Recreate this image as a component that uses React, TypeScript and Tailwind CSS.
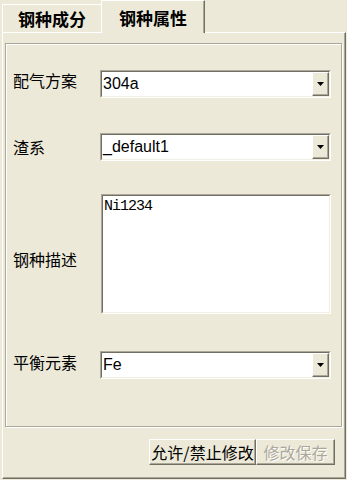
import React from "react";

const cjk = "font-['Noto_Sans_CJK_SC','Noto_Sans',sans-serif]";

function Arrow() {
  return (
    <svg width="7" height="4" viewBox="0 0 7 4">
      <path d="M0 0H7L3.5 4Z" fill="#000" />
    </svg>
  );
}

function Combo({ value }: { value: string }) {
  return (
    <div className="flex h-[28px] w-[231px] border border-[#ACA899] border-b-white border-r-white bg-white">
      <div className="flex flex-1 border border-[#716F64] border-b-[#F1EFE2] border-r-[#F1EFE2]">
        <div className="flex-1 pl-[1px] text-[16px] leading-[24px] text-black font-['Liberation_Sans',Arial,sans-serif]">
          {value}
        </div>
        <div className="flex h-[24px] w-[17px] items-center justify-center border border-white border-r-[#716F64] border-b-[#716F64] bg-[#ECE9D8] shadow-[inset_-1px_-1px_0_#ACA899]">
          <Arrow />
        </div>
      </div>
    </div>
  );
}

export default function App() {
  return (
    <div className={`flex h-[480px] w-[347px] flex-col bg-[#ECE9D8] ${cjk}`}>
      {/* tabs */}
      <div className="relative z-10 flex h-[32px] items-end pl-[2px]">
        <div className="flex h-[28px] w-[99px] items-center justify-center border-l border-t border-white text-[17px] font-bold leading-none text-black">
          钢种成分
        </div>
        <div className="mb-[-1px] flex h-[33px] w-[104px] items-center justify-center border-l border-t border-white border-r border-r-[#716F64] bg-[#ECE9D8] text-[17px] font-bold leading-none text-black shadow-[inset_-1px_0_0_#ACA899]">
          钢种属性
        </div>
      </div>
      {/* panel */}
      <div className="ml-[2px] mb-[1px] flex w-[344px] flex-1 flex-col border-l border-t border-white border-r border-b border-r-[#716F64] border-b-[#716F64] shadow-[inset_-1px_-1px_0_#ACA899]">
        <div className="ml-[2px] mt-[10px] flex h-[384px] w-[337px] flex-col border border-[#ACA899] pl-[7px] pt-[26px] shadow-[inset_1px_1px_0_#fff,1px_1px_0_#fff]">
          <div className="flex items-center">
            <div className="mb-[8px] w-[87px] text-[16px] leading-[16px] text-black">配气方案</div>
            <Combo value="304a" />
          </div>
          <div className="mt-[35px] flex items-center">
            <div className="w-[87px] text-[16px] leading-[16px] text-black">渣系</div>
            <Combo value="_default1" />
          </div>
          <div className="mt-[33px] flex items-center">
            <div className="mt-[10px] w-[88px] text-[16px] leading-[16px] text-black">钢种描述</div>
            <div className="h-[120px] w-[230px] border border-[#ACA899] border-b-white border-r-white bg-white">
              <div className="h-full border border-[#716F64] border-b-[#F1EFE2] border-r-[#F1EFE2] pl-[1px] pt-[3px] font-['Liberation_Mono',monospace] text-[15px] leading-[16px] tracking-[-1px] text-black">
                Ni1234
              </div>
            </div>
          </div>
          <div className="mt-[37px] flex items-center">
            <div className="mb-[7px] w-[87px] text-[16px] leading-[16px] text-black">平衡元素</div>
            <Combo value="Fe" />
          </div>
        </div>
        <div className="mt-[12px] flex justify-end pr-[10px]">
          <div className="flex h-[26px] w-[107px] items-center justify-center border border-white border-r-[#716F64] border-b-[#716F64] text-[16px] leading-none text-black shadow-[inset_-1px_-1px_0_#ACA899]">
            允许/禁止修改
          </div>
          <div className="flex h-[26px] w-[79px] items-center justify-center border border-white border-r-[#716F64] border-b-[#716F64] text-[16px] leading-none text-[#ACA899] shadow-[inset_-1px_-1px_0_#ACA899] [text-shadow:1px_1px_0_#fff]">
            修改保存
          </div>
        </div>
      </div>
    </div>
  );
}
